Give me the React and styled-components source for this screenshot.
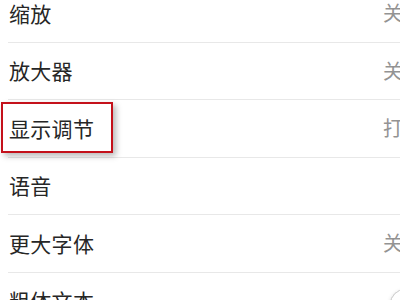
import React from "react";
import styled, { createGlobalStyle } from "styled-components";

const Global = createGlobalStyle`
  html, body { margin: 0; padding: 0; background: #ffffff; }
  body { overflow: hidden; }
`;

const Page = styled.div`
  width: 400px;
  height: 300px;
  overflow: hidden;
  background: #ffffff;
  font-family: "Noto Sans CJK SC", "Noto Sans", sans-serif;
`;

const List = styled.div`
  margin: -15px -6px 0 8px;
  display: flex;
  flex-direction: column;
`;

const Row = styled.div`
  position: relative;
  box-sizing: border-box;
  height: 57.5px;
  flex: none;
  display: flex;
  align-items: center;
  justify-content: space-between;
  padding-left: 1px;
  border-bottom: 1.5px solid #e8e8e8;
`;

const Label = styled.span`
  font-size: 21px;
  color: #262626;
  letter-spacing: 0.3px;
  line-height: 1;
`;

const Value = styled.span`
  font-size: 20px;
  color: #939393;
  line-height: 1;
  margin-right: 3px;
`;

const Highlight = styled.div`
  position: absolute;
  left: -7px;
  top: 2px;
  width: 112px;
  height: 51px;
  box-sizing: border-box;
  border: 2px solid #c4111b;
  box-shadow: 3px 3px 6px rgba(0, 0, 0, 0.28);
  pointer-events: none;
`;

const Switch = styled.div`
  flex: none;
  width: 52px;
  height: 30px;
  box-sizing: border-box;
  border: 1.5px solid #dcdcdc;
  border-radius: 16px;
  background: #ffffff;
  position: relative;
  margin-right: -36px;
  margin-top: 6px;
`;

const Knob = styled.div`
  position: absolute;
  left: -1px;
  top: -1px;
  width: 28px;
  height: 28px;
  border-radius: 50%;
  background: #fff;
  border: 1px solid #cfcfcf;
  box-shadow: 0 2px 4px rgba(0,0,0,0.18);
`;

const rows = [
  { label: "缩放", value: "关" },
  { label: "放大器", value: "关" },
  { label: "显示调节", value: "打", highlight: true },
  { label: "语音" },
  { label: "更大字体", value: "关" },
  { label: "粗体文本", toggle: true },
];

export default function App() {
  return (
    <Page>
      <Global />
      <List>
        {rows.map((r) => (
          <Row key={r.label}>
            <Label>{r.label}</Label>
            {r.value && <Value>{r.value}</Value>}
            {r.toggle && (
              <Switch>
                <Knob />
              </Switch>
            )}
            {r.highlight && <Highlight />}
          </Row>
        ))}
      </List>
    </Page>
  );
}
